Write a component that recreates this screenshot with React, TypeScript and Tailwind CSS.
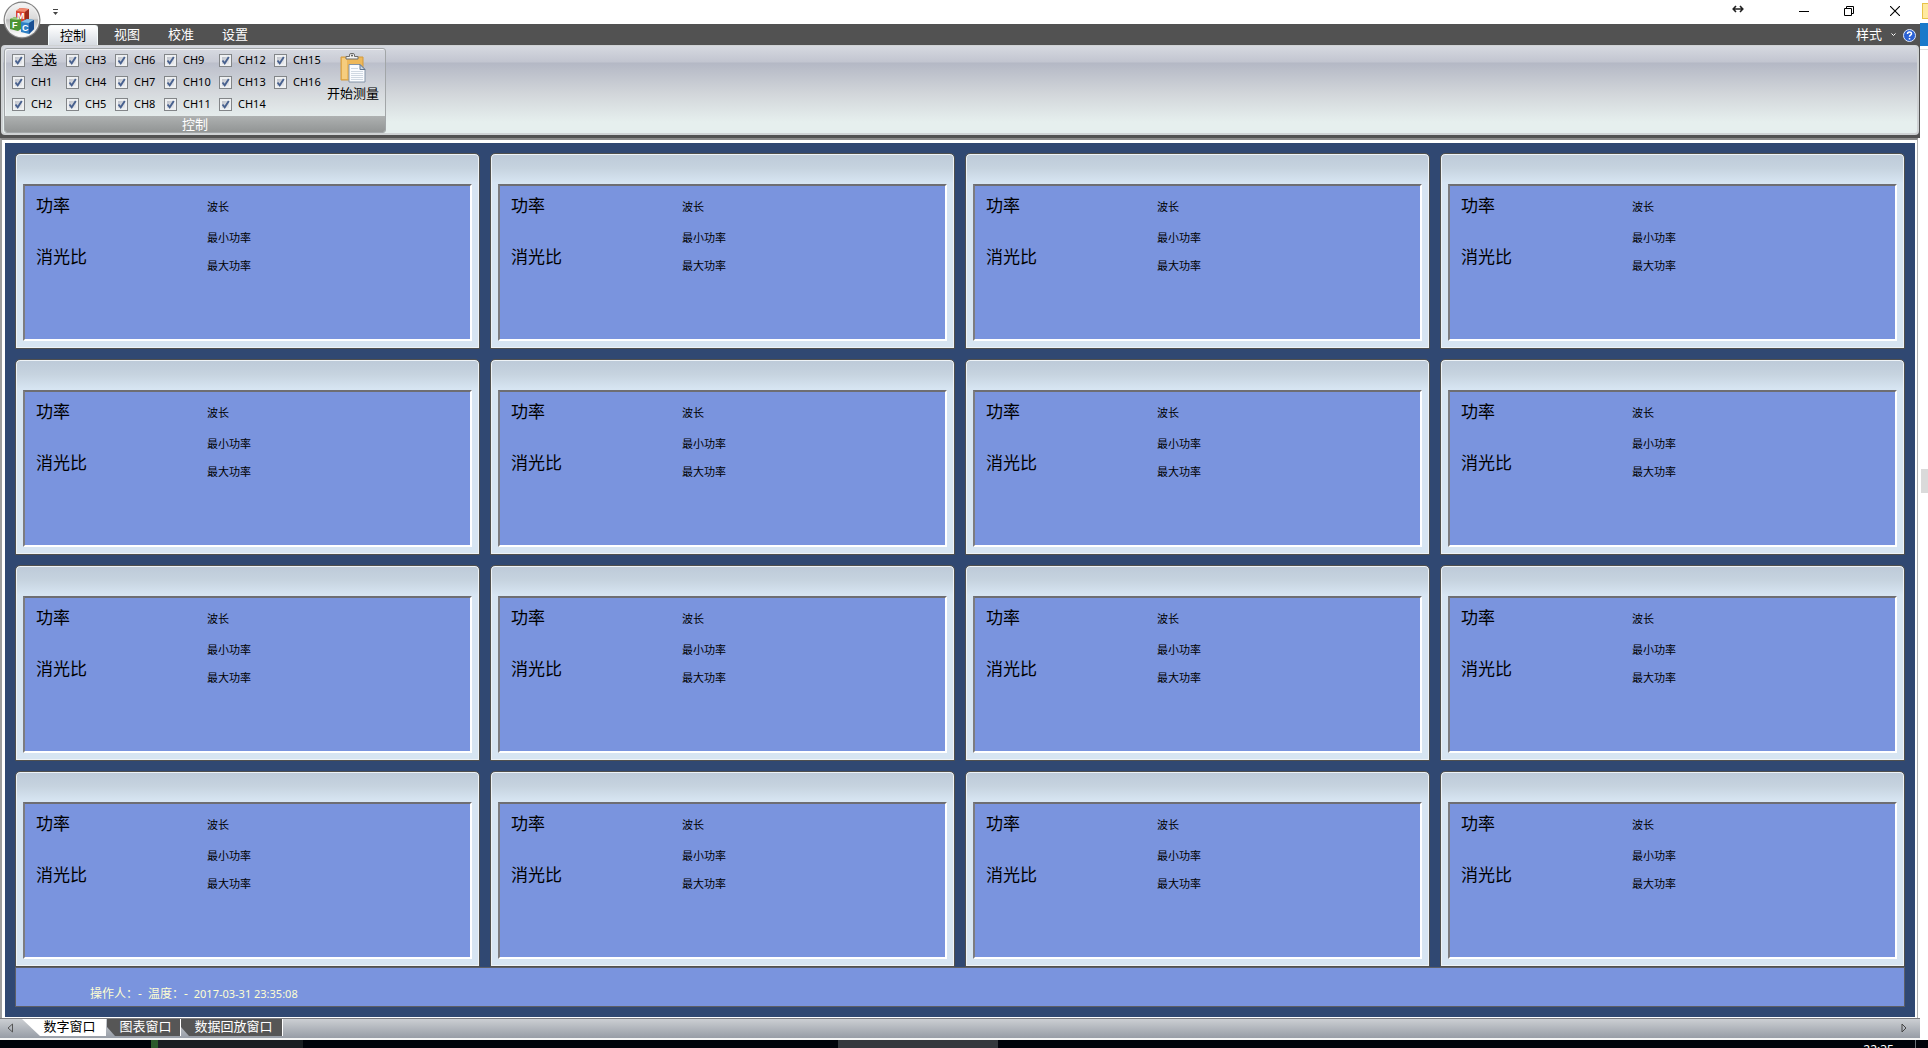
import { useId } from "react";

const channelColumns = [
  { width: "w-[54px]", items: ["全选", "CH1", "CH2"] },
  { width: "w-[49px]", items: ["CH3", "CH4", "CH5"] },
  { width: "w-[49px]", items: ["CH6", "CH7", "CH8"] },
  { width: "w-[55px]", items: ["CH9", "CH10", "CH11"] },
  { width: "w-[55px]", items: ["CH12", "CH13", "CH14"] },
  { width: "w-[50px]", items: ["CH15", "CH16"] },
];

const cards = Array.from({ length: 16 }, (_, i) => i);

function Orb() {
  return (
    <svg width="38" height="38" viewBox="0 0 38 38">
      <defs>
        <linearGradient id="orb" x1="0" y1="0" x2="0" y2="1">
          <stop offset="0" stopColor="#f4f4f4" />
          <stop offset="0.45" stopColor="#dadada" />
          <stop offset="0.5" stopColor="#bcbcbc" />
          <stop offset="1" stopColor="#ffffff" />
        </linearGradient>
      </defs>
      <circle cx="19" cy="19" r="18.500" fill="#808080" />
      <circle cx="19" cy="19" r="17.300" fill="#f0f0f0" />
      <circle cx="19" cy="19" r="16" fill="url(#orb)" />
      <path d="M13 10l4-3 9 1v10l-4 4-9-1z" fill="#d8452f" />
      <path d="M13 10l4-3 9 1-4 3z" fill="#f08a70" />
      <path d="M22 11l4-3v10l-4 4z" fill="#9c2a1c" />
      <path d="M7 18l5-2 6 2v10l-3 2-8-2z" fill="#4c9434" />
      <path d="M7 18l5-2 6 2-3 1z" fill="#9ccb7c" />
      <path d="M18 21l6-3 7 1v9l-5 5-8-2z" fill="#2f7fc4" />
      <path d="M18 21l6-3 7 1-5 3z" fill="#86c0e8" />
      <path d="M26 22l5-3v9l-5 5z" fill="#1a4f92" />
      <g fill="#fff" fontFamily="Liberation Sans, sans-serif" fontWeight="bold">
        <text x="14" y="18" fontSize="9">M</text>
        <text x="9" y="27" fontSize="9">F</text>
        <text x="19" y="30" fontSize="9">C</text>
      </g>
    </svg>
  );
}

function ClipboardIcon() {
  return (
    <svg width="26" height="30" viewBox="0 0 26 30">
      <path d="M1 4h22v23H1z" fill="#eeb85a" stroke="#d39a3c" />
      <path d="M2 5h5v21H2z" fill="#f6cd7e" />
      <path d="M6 6V3.500h3.500V2a1.500 1.500 0 0 1 1.500-1.500h2A1.500 1.500 0 0 1 14.500 2v1.500H18V6z" fill="#f2f2f2" stroke="#6c6c6c" />
      <circle cx="12" cy="2.500" r="1" fill="#555" />
      <path d="M9 11.500h11l5 5v12.500H9z" fill="#fafcff" stroke="#8394a8" />
      <path d="M20 11.500v5h5z" fill="#c9d6e4" stroke="#60758f" />
      <path d="M11 15.500h7M11 18.500h12M11 20.500h12M11 22.500h12M11 24.500h12M11 26.500h12" stroke="#cfd8e2" />
    </svg>
  );
}

function ChannelBox({ label }: { label: string }) {
  const id = useId();
  return (
    <div className="flex h-[22px] items-center gap-[6px]">
      <span className="grid">
        <input
          id={id}
          type="checkbox"
          defaultChecked
          className="peer col-start-1 row-start-1 size-[13px] appearance-none border border-[#828588] bg-linear-to-br from-[#b4b8c2] to-[#f6f6f6] shadow-[inset_0_0_0_2px_#eef0f2]"
        />
        <svg
          viewBox="0 0 13 13"
          className="pointer-events-none invisible col-start-1 row-start-1 size-[13px] peer-checked:visible"
        >
          <path d="M3.5 6.5L5.7 9.3L9.8 3" fill="none" stroke="#48618f" strokeWidth="1.9" />
        </svg>
      </span>
      <label htmlFor={id} className={label === "全选" ? "text-[13px]" : "text-[11px]"}>
        {label}
      </label>
    </div>
  );
}

function TitleBar() {
  return (
    <header className="flex h-6 items-center bg-white text-black">
      <button aria-label="自定义" className="ml-[52px]">
        <svg width="7" height="8" viewBox="0 0 7 8">
          <path d="M1 1.5h5" stroke="#444" />
          <path d="M1 4h5L3.5 7z" fill="#444" />
        </svg>
      </button>
      <svg width="12" height="8" viewBox="0 0 12 8" className="mr-[55px] mb-[6px] ml-auto">
        <path d="M1 4h10M4 1L1.2 4L4 7M8 1l2.800 3L8 7" fill="none" stroke="#222" strokeWidth="1.6" />
      </svg>
      <button aria-label="最小化" className="mr-[35px]">
        <svg width="10" height="10" viewBox="0 0 10 10">
          <path d="M0 4.500h10" stroke="#000" />
        </svg>
      </button>
      <button aria-label="还原" className="mr-[36px] mb-[2px]">
        <svg width="10" height="10" viewBox="0 0 10 10">
          <path d="M.5 2.500h7v7h-7zM2.500 2.500v-2h7v7h-2" fill="none" stroke="#000" />
        </svg>
      </button>
      <button aria-label="关闭" className="mr-5 mb-[2px]">
        <svg width="10" height="10" viewBox="0 0 10 10">
          <path d="M0 0l10 10M10 0L0 10" stroke="#000" strokeWidth="1.100" />
        </svg>
      </button>
    </header>
  );
}

function RibbonTabs() {
  return (
    <nav className="flex h-[21px] items-center gap-1 pt-px pl-12 text-[13px] text-white">
      <button className="h-full w-[50px] rounded-t-[3px] border border-b-0 border-[#f4fbfb] bg-linear-to-b from-white to-[#d6dbe2] text-black">
        控制
      </button>
      {["视图", "校准", "设置"].map((t) => (
        <button key={t} className="h-full w-[50px]">
          {t}
        </button>
      ))}
      <button className="ml-auto flex items-center gap-[9px]">
        样式
        <svg width="5" height="4" viewBox="0 0 5 4">
          <path d="M.5.5l2 2l2-2" fill="none" stroke="#fff" />
        </svg>
      </button>
      <button aria-label="帮助" className="mr-1 ml-[3px]">
        <svg width="13" height="13" viewBox="0 0 13 13">
          <circle cx="6.500" cy="6.500" r="6" fill="#2c62d4" stroke="#dfe9fa" />
          <path d="M4.500 5c0-2.600 4-2.600 4-.2c0 1.400-2 1.400-2 3M6.500 9v1.500" fill="none" stroke="#fff" strokeWidth="1.500" />
        </svg>
      </button>
    </nav>
  );
}

function Ribbon() {
  return (
    <div className="mx-px mb-[3px] flex rounded-[4px] border-2 border-t border-[#cfd2d4] bg-linear-[180deg,#d6d9e0_0px,#c2c5d0_16px,#b4b8c5_17px,#d2d6da_48px,#e6efee_76px,#e6efee_100%] pt-[2px] pl-px">
      <section className="overflow-hidden rounded-[3px] border border-[#a2a6a8] bg-white/10 shadow-[inset_1px_1px_0_#f0f2f4]">
        <div className="flex h-[67px] pl-[7px]">
          <div className="flex">
            {channelColumns.map((col) => (
              <div key={col.items[0]} className={col.width}>
                {col.items.map((c) => (
                  <ChannelBox key={c} label={c} />
                ))}
              </div>
            ))}
          </div>
          <button className="mr-[6px] ml-[3px] flex flex-col items-center pt-1 text-[13px] leading-[20px]">
            <ClipboardIcon />
            <span>开始测量</span>
          </button>
        </div>
        <h2 className="bg-linear-to-b from-[#aeb1b1] to-[#929595] text-center text-[13px] leading-4 text-white">
          控制
        </h2>
      </section>
    </div>
  );
}

function ChannelCard() {
  return (
    <article className="flex flex-col rounded-t-[5px] border border-[#50504e] bg-linear-[180deg,#bdcad8_0px,#c6d3df_14px,#d7e5f2_29px] px-[7px] pt-[30px] pb-[7px] shadow-[inset_0_0_0_1px_#eef3f7]">
      <div className="flex flex-1 border-2 border-t-[#6e6e72] border-r-white border-b-white border-l-[#7c7c80] bg-[#7a94de] pl-[11px] text-black">
        <div className="w-[171px] pt-2 text-[17px] leading-6">
          <p>功率</p>
          <p className="mt-[27px]">消光比</p>
        </div>
        <div className="pt-[13px] text-[11px] leading-4">
          <p>波长</p>
          <p className="mt-[15px]">最小功率</p>
          <p className="mt-3">最大功率</p>
        </div>
      </div>
    </article>
  );
}

function SheetTabs() {
  return (
    <footer className="flex h-5 items-start border-t border-[#7c7c80] bg-linear-to-b from-[#cccfd3] to-[#979da6] text-[13px] leading-[13px]">
      <button aria-label="向左滚动" className="mt-[4px] ml-[7px]">
        <svg width="7" height="10" viewBox="0 0 7 10">
          <path d="M5.500 1v8L1 5z" fill="none" stroke="#555" />
        </svg>
      </button>
      <button className="ml-2 h-[17px] w-[84px] bg-white pb-[3px] pl-[11px] text-black [clip-path:polygon(0_0,100%_0,100%_100%,18px_100%)]">
        数字窗口
      </button>
      <button className="ml-px h-[17px] w-[74px] border-r border-white bg-[#565656] pb-[3px] pl-1 text-white [clip-path:polygon(0_0,100%_0,100%_100%,8px_100%,0_8px)]">
        图表窗口
      </button>
      <button className="h-[17px] w-[102px] border-r border-white bg-[#565656] pb-[3px] pl-1 text-white [clip-path:polygon(0_0,100%_0,100%_100%,8px_100%,0_8px)]">
        数据回放窗口
      </button>
      <button aria-label="向右滚动" className="mt-[4px] mr-[13px] ml-auto">
        <svg width="6" height="10" viewBox="0 0 6 10">
          <path d="M1 1v8l4-4z" fill="none" stroke="#444" />
        </svg>
      </button>
    </footer>
  );
}

export default function App() {
  return (
    <div className="flex min-h-screen flex-col bg-white font-['Noto_Sans','Noto_Sans_CJK_SC',sans-serif] text-black">
      <div className="flex flex-1">
        <div className="relative flex flex-1 flex-col">
          <TitleBar />
          <div className="bg-[#525252]">
            <RibbonTabs />
            <Ribbon />
          </div>
          <button aria-label="应用菜单" className="absolute top-px left-[3px]">
            <Orb />
          </button>
          <div className="mr-[2px] flex flex-1 flex-col border-t-2 border-r border-l-2 border-t-[#8a8a8a] border-r-[#b0b0b0] border-l-[#a0a0a0]">
            <main className="flex flex-1 flex-col border-2 border-t-[3px] border-b border-l-[3px] border-white bg-[#304872] p-[10px]">
              <div className="grid flex-1 auto-rows-fr grid-cols-4 gap-[10px]">
                {cards.map((i) => (
                  <ChannelCard key={i} />
                ))}
              </div>
              <p className="flex gap-[6px] border border-[#5d5f66] bg-[#7a94de] pt-[18px] pb-1 pl-[74px] text-[12px] leading-4 text-[#ffffd2]">
                <span>操作人：-</span>
                <span>温度：-</span>
                <time className="text-[11px]">2017-03-31 23:35:08</time>
              </p>
            </main>
          </div>
          <SheetTabs />
          <div className="h-[2px] bg-[#f4f4f4]" />
        </div>
        <aside className="flex w-2 flex-col">
          <div className="mt-[3px] ml-[2px] h-4 border border-r-0 border-[#e8c34a] bg-[#ffe9a0]" />
          <div className="mt-1 h-[23px] bg-[#1979ca]" />
          <div className="mt-[3px] h-px bg-[#dcdcdc]" />
          <div className="mt-[419px] ml-px h-6 bg-[#dadada]" />
        </aside>
      </div>
      <div className="flex h-2 overflow-hidden bg-[#00030a]">
        <div className="ml-[151px] w-[7px] bg-[#2a5a2a]" />
        <div className="w-[145px] bg-[#1a1e22]" />
        <div className="ml-[535px] w-[160px] bg-[#34383d]" />
        <time className="mr-[21px] ml-auto pt-1 text-[12px] leading-3 text-white">22:35</time>
        <div className="mr-3 w-px bg-[#6b7078]" />
      </div>
    </div>
  );
}
